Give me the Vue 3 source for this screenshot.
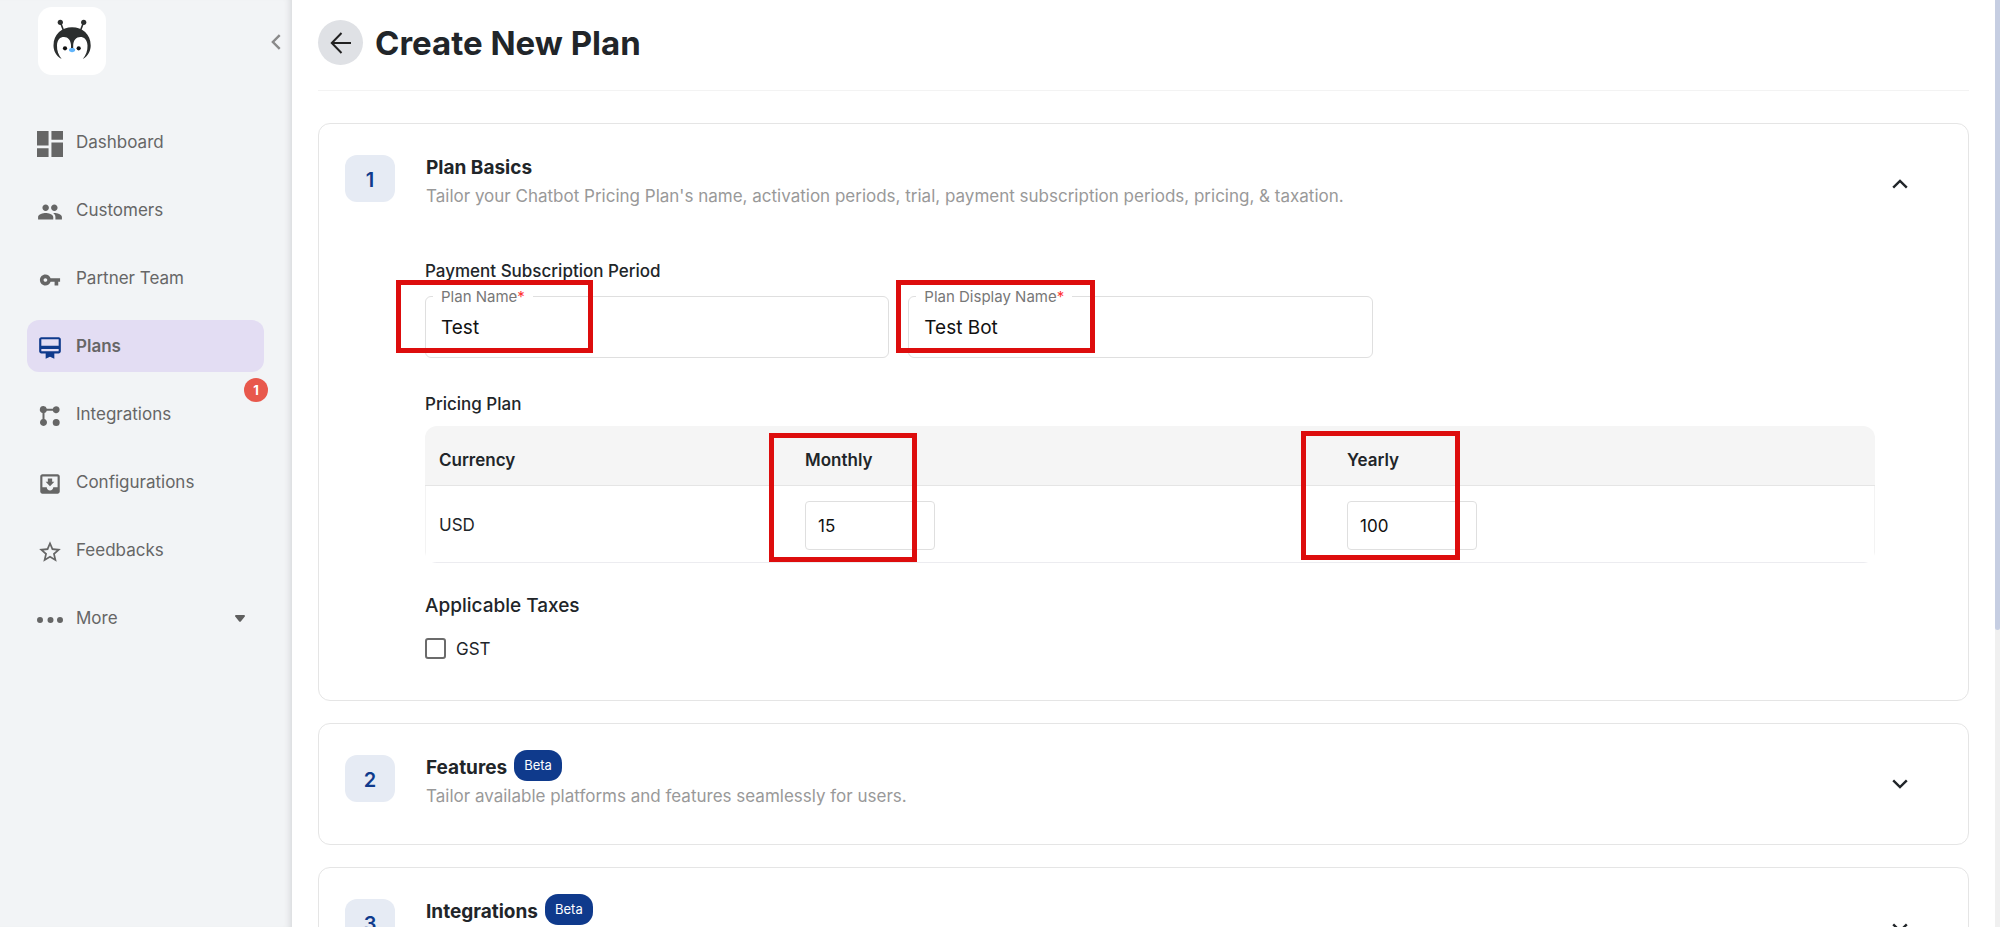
<template>
  <div class="app">
    <aside class="sidebar">
      <div class="sidebar-top">
        <a href="#" class="logo" aria-label="Home">
          <svg viewBox="0 0 68 68" width="68" height="68">
            <g stroke="#2b2e2e" stroke-width="1.6" stroke-linecap="round">
              <path d="M22.5 15.5l3 8M45.5 15.5l-3 8" />
            </g>
            <circle cx="22.3" cy="15.3" r="2.6" fill="#2b2e2e" />
            <circle cx="45.7" cy="15.3" r="2.6" fill="#2b2e2e" />
            <path
              fill="#2b2e2e"
              d="M23.7 52C17.5 49 15.5 43 15.5 38.5 15.5 27 24 20.3 34.1 20.3S52.7 27 52.7 38.5C52.7 43 50.7 49 44.8 52 48 48 49.7 43.5 49.5 38.5 49.2 32.5 46 30 42.3 30 38.2 30 35.5 33 35.2 38V42H33V38C32.7 33 30 30 26 30 22.2 30 19.2 32.5 19 38.5 18.8 43.5 20.5 48 23.7 52Z"
            />
            <circle cx="27" cy="41.3" r="2.1" fill="#111" />
            <circle cx="40.7" cy="41.3" r="2.1" fill="#111" />
            <path fill="#62b5fb" d="M31 43c0-1.4 1.5-2 3.1-2s3.1.6 3.1 2-1.5 2.2-3.1 2.2S31 44.3 31 43z" />
          </svg>
        </a>
        <button type="button" class="collapse-btn" aria-label="Collapse menu">
          <svg viewBox="0 0 10 16" width="10" height="16" fill="none" stroke="#8a8a8a" stroke-width="2.4">
            <path d="M8.7 1.2L1.9 8l6.8 6.8" />
          </svg>
        </button>
      </div>
      <nav class="nav">
        <a
          v-for="item in navItems"
          :key="item.label"
          href="#"
          class="nav-item"
          :class="{ active: item.active }"
        >
          <span class="nav-icon">
            <svg :viewBox="item.box || '0 0 24 24'" :width="item.size || 26" :height="item.size || 26">
              <path :d="item.icon" fill="currentColor" />
            </svg>
          </span>
          <span class="nav-label">{{ item.label }}</span>
          <span v-if="item.badge" class="nav-badge">{{ item.badge }}</span>
          <svg v-if="item.expandable" class="nav-caret" viewBox="0 0 10 7" width="10" height="7">
            <path d="M1 0h8c1 0 1.3 1 .6 1.8L6 6.2c-.6.7-1.4.7-2 0L.4 1.8C-.3 1 0 0 1 0z" fill="#5f5f5f" />
          </svg>
        </a>
      </nav>
    </aside>

    <main class="main">
      <header class="page-header">
        <button type="button" class="back-btn" aria-label="Back">
          <svg viewBox="0 0 22 22" width="22" height="22" fill="none" stroke="#212121" stroke-width="2">
            <path d="M21 11H2M11.5 1L1.8 11l9.7 10" />
          </svg>
        </button>
        <h1>Create New Plan</h1>
      </header>

      <section v-for="step in steps" :key="step.no" class="card">
        <div class="card-head">
          <span class="step-no">{{ step.no }}</span>
          <div class="card-text">
            <h2>{{ step.title }} <span v-if="step.beta" class="beta">Beta</span></h2>
            <p>{{ step.text }}</p>
          </div>
          <button
            type="button"
            class="toggle"
            :aria-expanded="step.open"
            :aria-label="'Toggle ' + step.title"
            @click="step.open = !step.open"
          >
            <svg viewBox="0 0 16 10" width="16" height="10" fill="none" stroke="#212529" stroke-width="2.4">
              <path :d="step.open ? 'M1.2 8.7L8 1.9l6.8 6.8' : 'M1.2 1.3L8 8.1l6.8-6.8'" />
            </svg>
          </button>
        </div>

        <div v-if="step.no === 1 && step.open" class="card-body">
          <h3>Payment Subscription Period</h3>
          <div class="fields">
            <div class="field">
              <label for="plan-name">Plan Name<span class="req">*</span></label>
              <input id="plan-name" v-model="plan.name" type="text">
              <span class="mark mark-name"></span>
            </div>
            <div class="field">
              <label for="plan-display">Plan Display Name<span class="req">*</span></label>
              <input id="plan-display" v-model="plan.displayName" type="text">
              <span class="mark mark-display"></span>
            </div>
          </div>

          <h3>Pricing Plan</h3>
          <div class="table-wrap">
            <table>
              <thead>
                <tr>
                  <th class="col-currency">Currency</th>
                  <th id="col-monthly">Monthly<span class="mark mark-monthly"></span></th>
                  <th id="col-yearly">Yearly<span class="mark mark-yearly"></span></th>
                </tr>
              </thead>
              <tbody>
                <tr>
                  <td>USD</td>
                  <td><input v-model="plan.monthly" class="price" type="text" aria-labelledby="col-monthly"></td>
                  <td><input v-model="plan.yearly" class="price" type="text" aria-labelledby="col-yearly"></td>
                </tr>
              </tbody>
            </table>
          </div>

          <h3 class="tax-title">Applicable Taxes</h3>
          <label class="check">
            <input v-model="plan.gst" type="checkbox">
            <span>GST</span>
          </label>
        </div>
      </section>
    </main>

    <div class="scroll-track" aria-hidden="true"><div class="scroll-thumb"></div></div>
  </div>
</template>

<script setup>
import { reactive } from 'vue'

const navItems = [
  { label: 'Dashboard', box: '3 3 18 18', icon: 'M3 13h8V3H3v10zm0 8h8v-6H3v6zm10 0h8V11h-8v10zm0-18v6h8V3h-8z' },
  {
    label: 'Customers',
    icon: 'M16 11c1.66 0 2.99-1.34 2.99-3S17.66 5 16 5c-1.66 0-3 1.34-3 3s1.34 3 3 3zm-8 0c1.66 0 2.99-1.34 2.99-3S9.66 5 8 5C6.34 5 5 6.34 5 8s1.34 3 3 3zm0 2c-2.33 0-7 1.17-7 3.5V19h14v-2.5c0-2.33-4.67-3.5-7-3.5zm8 0c-.29 0-.62.02-.97.05 1.16.84 1.97 1.97 1.97 3.45V19h6v-2.5c0-2.33-4.67-3.5-7-3.5z',
  },
  {
    label: 'Partner Team',
    size: 22,
    icon: 'M12.65 10C11.83 7.67 9.61 6 7 6c-3.31 0-6 2.69-6 6s2.69 6 6 6c2.61 0 4.83-1.67 5.65-4H17v4h4v-4h2v-4H12.65zM7 14c-1.1 0-2-.9-2-2s.9-2 2-2 2 .9 2 2-.9 2-2 2z',
  },
  {
    label: 'Plans',
    active: true,
    icon: 'M20 2H4c-1.11 0-2 .89-2 2v11c0 1.11.89 2 2 2h4v5l4-2 4 2v-5h4c1.11 0 2-.89 2-2V4c0-1.11-.89-2-2-2zm0 13H4v-2h16v2zm0-5H4V4h16v6z',
  },
  {
    label: 'Integrations',
    badge: 1,
    box: '0 0 26 26',
    icon: 'M6.5 3a3.5 3.5 0 0 1 3.3 2.7h6A3.5 3.5 0 1 1 15.8 7.7h-6A3.5 3.5 0 0 1 7.5 9.9v6.2A3.5 3.5 0 1 1 5.5 16.1V9.9A3.5 3.5 0 0 1 6.5 3zM19.2 16a3.5 3.5 0 1 1 0 7 3.5 3.5 0 0 1 0-7z',
  },
  {
    label: 'Configurations',
    icon: 'M19 3H4.99c-1.1 0-1.98.9-1.98 2L3 19c0 1.1.89 2 1.99 2H19c1.1 0 2-.9 2-2V5c0-1.1-.9-2-2-2zm0 12h-4c0 1.66-1.34 3-3 3s-3-1.34-3-3H4.99V5H19v10zm-3-5h-2V7h-4v3H8l4 4 4-4z',
  },
  {
    label: 'Feedbacks',
    icon: 'M22 9.24l-7.19-.62L12 2 9.19 8.63 2 9.24l5.46 4.73L5.82 21 12 17.27 18.18 21l-1.63-7.03L22 9.24zM12 15.4l-3.76 2.27 1-4.28-3.32-2.88 4.38-.38L12 6.1l1.71 4.04 4.38.38-3.32 2.88 1 4.28L12 15.4z',
  },
  {
    label: 'More',
    expandable: true,
    box: '0 0 26 26',
    icon: 'M3 10a3 3 0 1 1 0 6 3 3 0 0 1 0-6zm10.5 0a3 3 0 1 1 0 6 3 3 0 0 1 0-6zm9.5 0a3 3 0 1 1 0 6 3 3 0 0 1 0-6z',
  },
]

const steps = reactive([
  {
    no: 1,
    title: 'Plan Basics',
    text: "Tailor your Chatbot Pricing Plan's name, activation periods, trial, payment subscription periods, pricing, & taxation.",
    open: true,
  },
  { no: 2, title: 'Features', text: 'Tailor available platforms and features seamlessly for users.', beta: true, open: false },
  { no: 3, title: 'Integrations', text: '', beta: true, open: false },
])

const plan = reactive({
  name: 'Test',
  displayName: 'Test Bot',
  monthly: '15',
  yearly: '100',
  gst: false,
})
</script>

<style>
html, body {
  margin: 0;
  background: #fff;
}
</style>

<style scoped>
.app {
  display: flex;
  height: 100vh;
  overflow: hidden;
  font-family: Inter, 'Liberation Sans', sans-serif;
  font-size: 17px;
  color: #212529;
}
.app *,
.app *::before {
  box-sizing: border-box;
}
button {
  padding: 0;
  border: 0;
  background: none;
  cursor: pointer;
}
h1, h2, h3, p {
  margin: 0;
}

/* sidebar */
.sidebar {
  flex: 0 0 292px;
  padding: 7px 28px 0 27px;
  background: #f2f4f6;
  box-shadow: inset -7px 0 6px -5px #d6d8db;
}
.sidebar-top {
  display: flex;
  justify-content: space-between;
  align-items: flex-start;
  padding-left: 11px;
  margin: 0 -18px 41px 0;
}
.logo {
  width: 68px;
  height: 68px;
  border-radius: 14px;
  background: #fff;
}
.collapse-btn {
  width: 12px;
  height: 16px;
  margin-top: 27px;
}
.nav {
  display: flex;
  flex-direction: column;
  gap: 16px;
}
.nav-item {
  position: relative;
  display: flex;
  align-items: center;
  gap: 13px;
  height: 52px;
  padding: 0 19px 0 10px;
  border-radius: 12px;
  color: #666;
  text-decoration: none;
}
.nav-icon {
  display: flex;
  justify-content: center;
  width: 26px;
  padding-top: 3px;
}
.nav-label {
  flex: 1;
}
.nav-item.active {
  background: #e3ddf3;
}
.nav-item.active .nav-icon {
  color: #0f3a8c;
}
.nav-item.active .nav-label {
  font-weight: 600;
}
.nav-badge {
  position: absolute;
  top: -10px;
  right: -4px;
  width: 24px;
  height: 24px;
  border-radius: 50%;
  background: #e8584c;
  color: #fff;
  font-size: 13px;
  font-weight: 700;
  line-height: 24px;
  text-align: center;
}

/* page */
.main {
  flex: 1;
  min-width: 0;
  padding: 20px 26px 0;
  overflow: hidden;
}
.page-header {
  display: flex;
  align-items: center;
  gap: 12px;
  padding-bottom: 25px;
  margin-bottom: 32px;
  border-bottom: 1px solid #f3f3f3;
}
.back-btn {
  display: flex;
  align-items: center;
  justify-content: center;
  width: 45px;
  height: 45px;
  border-radius: 50%;
  background: #dfe1e5;
}
h1 {
  font-size: 33px;
  font-weight: 700;
  line-height: 40px;
}
.card {
  margin-bottom: 22px;
  border: 1px solid #e5e5e5;
  border-radius: 12px;
}
.card-head {
  display: flex;
  align-items: flex-start;
  min-height: 120px;
  padding: 31px 56px 31px 26px;
}
.step-no {
  flex: none;
  width: 50px;
  height: 47px;
  margin-right: 31px;
  border-radius: 12px;
  background: #e6ebf4;
  color: #0f3a8c;
  font-size: 20px;
  font-weight: 600;
  line-height: 50px;
  text-align: center;
}
.card-text {
  flex: 1;
}
h2 {
  display: flex;
  align-items: flex-end;
  gap: 7px;
  height: 26px;
  font-size: 19px;
  font-weight: 700;
  line-height: 26px;
}
.beta {
  padding: 0 10px;
  border-radius: 13px;
  background: #0f3a8c;
  color: #fff;
  font-size: 13px;
  font-weight: 400;
  line-height: 31px;
}
.card-text p {
  margin-top: 3px;
  color: #999;
  line-height: 24px;
}
.toggle {
  align-self: center;
  display: flex;
  align-items: center;
  justify-content: center;
  width: 24px;
  height: 24px;
}
.card-body {
  padding: 16px 93px 41px 106px;
}
h3 {
  font-size: 17px;
  font-weight: 500;
  line-height: 22px;
}
.fields {
  display: grid;
  grid-template-columns: repeat(3, 1fr);
  margin: 14px 0 35px;
}
.field {
  position: relative;
  margin-right: 19px;
}
.field label {
  position: absolute;
  top: -9px;
  left: 8px;
  padding: 0 8px;
  background: #fff;
  color: #777;
  font-size: 15px;
  line-height: 20px;
}
.req {
  color: #f33;
}
.field input,
.price {
  border: 1px solid #dfdfdf;
  background: #fff;
  font-family: inherit;
  color: #111;
}
.field input {
  display: block;
  width: 100%;
  height: 62px;
  padding: 0 15px;
  border-radius: 6px;
  font-size: 19px;
}
.table-wrap {
  margin-top: 11px;
  border-radius: 12px;
  overflow: hidden;
}
table {
  width: 100%;
  table-layout: fixed;
  border-collapse: separate;
  border-spacing: 0;
}
.col-currency {
  width: 366px;
}
th {
  position: relative;
  height: 60px;
  padding: 8px 14px 0;
  border-bottom: 1px solid #e5e5e5;
  background: #f5f5f5;
  font-weight: 600;
  text-align: left;
}
td {
  height: 77px;
  padding: 2px 14px 0;
  border-bottom: 1px solid #ececf0;
}
td:first-child {
  border-left: 1px solid #f3f3f3;
  padding-left: 13px;
}
td:last-child {
  border-right: 1px solid #f3f3f3;
}
.price {
  display: block;
  width: 130px;
  height: 49px;
  padding: 2px 12px 0;
  border-radius: 4px;
  font-size: 17px;
}
.tax-title {
  margin: 31px 0 20px;
  font-size: 19px;
  line-height: 24px;
}
.check {
  display: flex;
  align-items: center;
  gap: 10px;
  width: fit-content;
  height: 21px;
}
.check input {
  appearance: none;
  width: 21px;
  height: 21px;
  margin: 0;
  border: 2px solid #6b6b6b;
  border-radius: 3px;
}
.check input:checked {
  background: #0f3a8c;
}

/* callout frames drawn over the form */
.mark {
  position: absolute;
  z-index: 2;
  border: 5px solid #dd0d0d;
  pointer-events: none;
}
.mark-name {
  top: -16px;
  left: -29px;
  width: 197px;
  height: 73px;
}
.mark-display {
  top: -16px;
  left: -12px;
  width: 199px;
  height: 73px;
}
.mark-monthly {
  top: 7px;
  left: -22px;
  width: 148px;
  height: 129px;
}
.mark-yearly {
  top: 5px;
  left: -32px;
  width: 159px;
  height: 129px;
}

.scroll-track {
  flex: 0 0 5px;
  background: #f0f0f0;
}
.scroll-thumb {
  height: 68%;
  border-radius: 0 0 3px 3px;
  background: #c6cee2;
}
</style>
